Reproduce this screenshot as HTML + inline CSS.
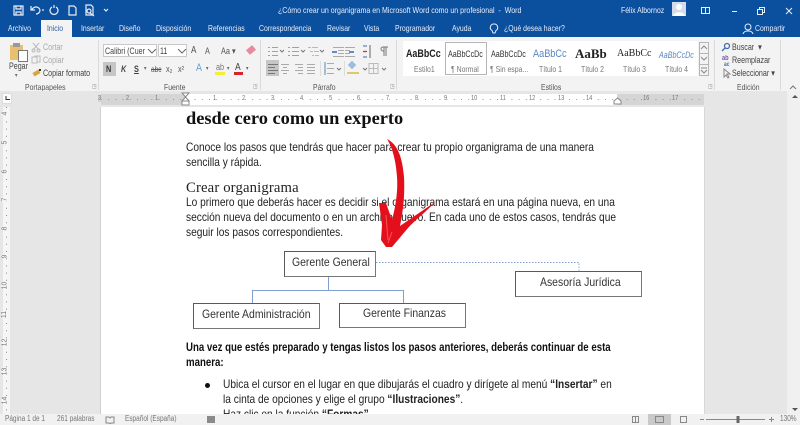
<!DOCTYPE html>
<html lang="es"><head><meta charset="utf-8"><title>Word</title>
<style>
html,body{margin:0;padding:0}
body{width:800px;height:425px;overflow:hidden;position:relative;background:#e6e6e6;font-family:"Liberation Sans",sans-serif;color:#444;filter:blur(.3px)}
.a{position:absolute;white-space:nowrap;line-height:1;transform:scaleX(.81);transform-origin:left top}
.r{position:absolute}
.tab{top:24px;font-size:8.5px;color:#e8eef7}
.lbl{font-size:8.5px;color:#555;top:83px}
.doc{font-size:12px;color:#222;transform:scaleX(.847)}
.bd{font-size:12px;color:#111;font-weight:700;transform:scaleX(.804)}
.bt{font-size:12px;color:#333;transform:scaleX(.87)}
.box{position:absolute;box-sizing:border-box;background:#fff;border:1px solid #5a5a5a;border-bottom-color:#777;border-right-color:#777}
.st{font-size:8.5px;color:#777}
.sep{position:absolute;top:40px;height:50px;width:1px;background:#dadada}
.stat{font-size:8px;color:#777;top:415px}
.rn{font-size:7px;color:#777;top:95px}
.sm{font-size:8.8px;color:#555}
.dim{font-size:8.8px;color:#aaa}
.ar{font-size:6px;color:#666}
.vn{font-size:7px;color:#777;left:3px;transform:rotate(-90deg);transform-origin:center}
</style></head><body>

<div class="r" style="left:0;top:0;width:800px;height:37px;background:#0b4f9f"></div>
<svg class="r" style="left:0;top:0" width="130" height="20" fill="none" stroke="#e8eef7" stroke-width="1.2">
<path d="M14 6h9v9h-9z"/><path d="M16 6v3h5V6M16 15v-3h5v3"/>
<path d="M32 10a4 3.500 0 1 1 4 4M31 6v4h4"/><path d="M42 10h2"/>
<path d="M52 7a4 4 0 1 0 4 0M54 5v3"/>
<path d="M69 6h5l2 2v7h-7z"/>
<path d="M86 5h5l2 2v8h-7zM90 13l4 3"/><circle cx="89" cy="11" r="2"/>
<path d="M104 9l2 2 2-2"/>
</svg>
<div class="a" style="left:278px;top:6px;font-size:8.5px;color:#e8eef7;transform:scaleX(.828)">¿Cómo crear un organigrama en Microsoft Word como un profesional &nbsp;-&nbsp; Word</div>
<div class="a" style="left:621px;top:6px;font-size:8.5px;color:#e8eef7">Félix Albornoz</div>
<div class="r" style="left:672px;top:2px;width:14px;height:14px;background:#d4dde9"></div>
<svg class="r" style="left:672px;top:2px" width="14" height="14"><circle cx="7" cy="5" r="3" fill="#fff"/><path d="M1 14c1-5 11-5 12 0z" fill="#fff"/></svg>
<svg class="r" style="left:695px;top:2px" width="105" height="16" fill="none" stroke="#e8eef7" stroke-width="1">
<path d="M6.500 5.500h8v6h-8zM10.500 5.500v6"/><path d="M37 9.500h5"/><path d="M62.500 7.500h5v5h-5zM64.500 7.500v-2h5v5h-2"/><path d="M91 6l6 6M97 6l-6 6"/>
</svg>
<div class="a tab" style="left:8px">Archivo</div>
<div class="r" style="left:41px;top:20px;width:31px;height:18px;background:#f3f3f3"></div>
<div class="a tab" style="left:47px;color:#2b5c9f">Inicio</div>
<div class="a tab" style="left:81px">Insertar</div>
<div class="a tab" style="left:119px">Diseño</div>
<div class="a tab" style="left:156px">Disposición</div>
<div class="a tab" style="left:208px">Referencias</div>
<div class="a tab" style="left:259px">Correspondencia</div>
<div class="a tab" style="left:327px">Revisar</div>
<div class="a tab" style="left:364px">Vista</div>
<div class="a tab" style="left:395px">Programador</div>
<div class="a tab" style="left:452px">Ayuda</div>
<svg class="r" style="left:489px;top:23px" width="10" height="12" fill="none" stroke="#e8eef7"><path d="M5 1a3.500 3.500 0 0 1 2 6.500L6 10H4L3 7.500A3.500 3.500 0 0 1 5 1z"/></svg>
<div class="a tab" style="left:504px">¿Qué desea hacer?</div>
<svg class="r" style="left:742px;top:23px" width="12" height="12" fill="none" stroke="#e8eef7"><circle cx="6" cy="4" r="3"/><path d="M1 11c1-4 9-4 10 0"/></svg>
<div class="a tab" style="left:755px">Compartir</div>

<div class="r" style="left:0;top:37px;width:800px;height:54px;background:#f3f3f3"></div>
<!-- Portapapeles -->
<div class="r" style="left:10px;top:45px;width:13px;height:15px;background:#e8c06f"></div>
<div class="r" style="left:13px;top:43px;width:7px;height:4px;background:#999"></div>
<div class="r" style="left:18px;top:50px;width:8px;height:10px;background:#fff;border:1px solid #777"></div>
<div class="a sm" style="left:9px;top:62px;color:#444">Pegar</div>
<div class="a ar" style="left:15px;top:73px">▾</div>
<svg class="r" style="left:31px;top:42px" width="12" height="36" fill="none" stroke="#bbb"><path d="M2 1l6 7M8 1L2 8"/><circle cx="2.500" cy="8.500" r="1.500"/><circle cx="7.500" cy="8.500" r="1.500"/><path d="M1 15h5v6H1zM4 15v-1h5v6H6"/></svg>
<div class="a dim" style="left:43px;top:43px">Cortar</div>
<div class="a dim" style="left:43px;top:56px">Copiar</div>
<div class="r" style="left:33px;top:71px;width:7px;height:4px;background:#d9a441;transform:rotate(-30deg)"></div>
<div class="r" style="left:39px;top:69px;width:2px;height:2px;background:#333"></div>
<div class="a sm" style="left:43px;top:69px;color:#444">Copiar formato</div>
<div class="a lbl" style="left:25px">Portapapeles</div>
<div class="a ar" style="left:92px;top:84px;color:#888">◳</div>
<div class="sep" style="left:98px"></div>
<!-- Fuente -->
<div class="r" style="left:103px;top:44px;width:54px;height:13px;background:#fff;border:1px solid #c8c8c8;box-sizing:border-box"></div>
<div class="a sm" style="left:105px;top:47px;color:#444">Calibri (Cuer</div>
<div class="r" style="left:158px;top:44px;width:29px;height:13px;background:#fff;border:1px solid #c8c8c8;box-sizing:border-box"></div>
<div class="a sm" style="left:160px;top:47px;color:#444">11</div>
<svg class="r" style="left:147px;top:49px" width="40" height="5" fill="none" stroke="#666"><path d="M1 0l4 4 4-4M31 0l4 4 4-4"/></svg>
<div class="a" style="left:191px;top:46px;font-size:10px;color:#555">A</div>
<div class="a" style="left:205px;top:47px;font-size:9px;color:#555">A</div>
<div class="a" style="left:221px;top:47px;font-size:9px;color:#555">Aa ▾</div>
<div class="r" style="left:247px;top:47px;width:8px;height:6px;background:#e58aa0;transform:rotate(-40deg)"></div>
<div class="r" style="left:103px;top:62px;width:13px;height:14px;background:#c6c6c6"></div>
<div class="a" style="left:106px;top:65px;font-size:9px;color:#333;font-weight:700">N</div>
<div class="a" style="left:121px;top:65px;font-size:9px;color:#444;font-weight:700;font-style:italic">K</div>
<div class="a" style="left:134px;top:65px;font-size:9px;color:#444;font-weight:700;text-decoration:underline">S</div>
<div class="a ar" style="left:144px;top:66px">▾</div>
<div class="a" style="left:151px;top:66px;font-size:8px;color:#555;text-decoration:line-through">abc</div>
<div class="a" style="left:166px;top:65px;font-size:9px;color:#555">x₂</div>
<div class="a" style="left:178px;top:65px;font-size:9px;color:#555">x²</div>
<div class="a" style="left:196px;top:63px;font-size:11px;color:#6c9bd1">A</div>
<div class="a ar" style="left:206px;top:66px">▾</div>
<div class="r" style="left:215px;top:72px;width:10px;height:3px;background:#f2ee3a"></div>
<div class="a" style="left:216px;top:63px;font-size:9px;color:#777">ab</div>
<div class="a ar" style="left:227px;top:66px">▾</div>
<div class="a" style="left:235px;top:62px;font-size:10.500px;color:#444">A</div>
<div class="r" style="left:234px;top:72px;width:9px;height:2.500px;background:#d8232a"></div>
<div class="a ar" style="left:246px;top:66px">▾</div>
<div class="a lbl" style="left:164px">Fuente</div>
<div class="a ar" style="left:253px;top:84px;color:#888">◳</div>
<div class="sep" style="left:260px"></div>
<!-- Parrafo -->
<div class="r" style="left:266px;top:60px;width:13px;height:16px;background:#c6c6c6"></div>
<svg class="r" style="left:260px;top:38px" width="136" height="42" fill="none" stroke="#aaa" stroke-width="1">
<path d="M8 9.500h2M12 9.500h6M8 13.500h2M12 13.500h6M8 17.500h2M12 17.500h6" stroke="#8aa5cc"/><path d="M20 12l2 2 2-2" stroke="#777"/>
<path d="M28 9.500h2M32 9.500h7M28 13.500h2M32 13.500h7M28 17.500h2M32 17.500h7" stroke="#8aa5cc"/><path d="M41 12l2 2 2-2" stroke="#777"/>
<path d="M48 9.500h3M52 9.500h6M50 13.500h3M54 13.500h5M52 17.500h2M55 17.500h4" stroke="#a8bcd8"/><path d="M60 12l2 2 2-2" stroke="#777"/>
<path d="M73 9.500h11M78 12.500h6M78 15.500h6M73 18.500h11" stroke="#aaa"/><path d="M77 14h-5" stroke="#2d6db5" stroke-width="1.500"/>
<path d="M85 9.500h10M85 12.500h5M85 15.500h5M85 18.500h10" stroke="#aaa"/><path d="M89 14h5" stroke="#2d6db5" stroke-width="1.500"/>
<path d="M110 7v13" stroke="#666"/><path d="M103 8h4M103 19h4" stroke="#5f86b8" stroke-width="1.300"/><path d="M103 13.500h4" stroke="#c33" stroke-width="1.300"/>
<path d="M124 9h-1a2 2 0 0 0 0 4h1M124 9v9M126 9v9M123 9h5" stroke="#777"/>
<path d="M8 26.500h10M8 29.500h7M8 32.500h10M8 35.500h7" stroke="#777"/>
<path d="M21 26.500h8M23 29.500h4M21 32.500h8M23 35.500h4M35 26.500h8M38 29.500h5M35 32.500h8M38 35.500h5M47 26.500h8M47 29.500h8M47 32.500h8M47 35.500h8"/>
<path d="M65 24v13" stroke="#5f86b8"/><path d="M67 25.500h7M67 30.500h7M67 35.500h7"/><path d="M77 30l2 2 2-2" stroke="#777"/>
<path d="M103 30l2 2 2-2M122 30l2 2 2-2" stroke="#777"/>
<path d="M109 25.500h9v10h-9zM113.500 25.500v10M109 30.500h9" stroke="#bbb"/>
<path d="M60.500 23v15M84.500 23v15" stroke="#ddd"/>
</svg>
<div class="r" style="left:349px;top:62px;width:6px;height:6px;background:#9dbbe0;transform:rotate(45deg)"></div>
<div class="r" style="left:347px;top:72px;width:12px;height:2px;background:#e0c76a"></div>
<div class="a lbl" style="left:313px">Párrafo</div>
<div class="a ar" style="left:390px;top:84px;color:#888">◳</div>
<div class="sep" style="left:396px"></div>
<!-- Estilos -->
<div class="r" style="left:403px;top:41px;width:295px;height:35px;background:#fff"></div>
<div class="r" style="left:445px;top:42px;width:42px;height:33px;border:1.500px solid #b5b5b5;box-sizing:border-box"></div>
<div class="a" style="left:406px;top:49px;font-size:11px;font-weight:700;color:#222">AaBbCc</div>
<div class="a st" style="left:414px;top:65px">Estilo1</div>
<div class="a" style="left:448px;top:50px;font-size:8.800px;color:#333">AaBbCcDc</div>
<div class="a st" style="left:451px;top:65px">¶ Normal</div>
<div class="a" style="left:491px;top:50px;font-size:8.800px;color:#333">AaBbCcDc</div>
<div class="a st" style="left:490px;top:65px">¶ Sin espa...</div>
<div class="a" style="left:533px;top:49px;font-size:11.300px;color:#5b86c0">AaBbCc</div>
<div class="a st" style="left:539px;top:65px">Título 1</div>
<div class="a" style="left:575px;top:47px;font-size:13px;font-weight:700;color:#222;font-family:'Liberation Serif',serif;transform:none">AaBb</div>
<div class="a st" style="left:581px;top:65px">Título 2</div>
<div class="a" style="left:617px;top:49px;font-size:10px;color:#222;font-family:'Liberation Serif',serif;transform:none">AaBbCc</div>
<div class="a st" style="left:623px;top:65px">Título 3</div>
<div class="a" style="left:659px;top:51px;font-size:8.800px;color:#5b86c0;font-style:italic">AaBbCcDc</div>
<div class="a st" style="left:665px;top:65px">Título 4</div>
<svg class="r" style="left:699px;top:42px" width="10" height="35" fill="#f3f3f3" stroke="#b5b5b5">
<path d="M.5 .5h9v11h-9zM.5 11.500h9v11h-9zM.5 22.500h9v11h-9z"/>
<path d="M2 7l3-3 3 3M2 15l3 3 3-3M2 26h6M2 28l3 3 3-3" fill="none" stroke="#888"/>
</svg>
<div class="a lbl" style="left:541px">Estilos</div>
<div class="a ar" style="left:708px;top:84px;color:#888">◳</div>
<div class="sep" style="left:714px"></div>
<!-- Edicion -->
<svg class="r" style="left:721px;top:41px" width="10" height="12" fill="none" stroke="#3f6fae" stroke-width="1.300"><circle cx="6" cy="5" r="2.500"/><path d="M4 7L1 10"/></svg>
<div class="a sm" style="left:732px;top:43px;color:#444">Buscar &nbsp;▾</div>
<div class="a" style="left:722px;top:55px;font-size:7px;color:#7a5aa6;font-weight:700">ab</div>
<div class="a" style="left:724px;top:62px;font-size:6px;color:#3f6fae;font-weight:700">ac</div>
<div class="a sm" style="left:732px;top:56px;color:#444">Reemplazar</div>
<svg class="r" style="left:723px;top:68px" width="10" height="11" fill="none" stroke="#888"><path d="M1 1v8l2-2 2 3 1-1-2-3h3z"/></svg>
<div class="a sm" style="left:732px;top:69px;color:#444">Seleccionar ▾</div>
<div class="a lbl" style="left:737px">Edición</div>
<div class="sep" style="left:780px"></div>
<svg class="r" style="left:789px;top:85px" width="8" height="5" fill="none" stroke="#777"><path d="M1 4l3-3 3 3"/></svg>

<!-- Ruler -->
<div class="r" style="left:0;top:91px;width:800px;height:16px;background:#e6e6e6"></div>
<div class="r" style="left:2px;top:93px;width:10px;height:11px;background:#fbfbfb;border:1px solid #ddd;box-sizing:border-box"></div>
<svg class="r" style="left:5px;top:96px" width="5" height="5" fill="none" stroke="#333"><path d="M1 0v3.500h4"/></svg>
<div class="r" style="left:101px;top:94px;width:85px;height:11px;background:#d5d5d5"></div>
<div class="r" style="left:186px;top:94px;width:431px;height:11px;background:#fff"></div>
<div class="r" style="left:617px;top:94px;width:87px;height:11px;background:#d5d5d5"></div>
<svg class="r" style="left:101px;top:91px" width="603" height="16" stroke="#999" stroke-dasharray="1 6.200" fill="none"><path d="M0 8.500h603"/></svg>
<div class="a rn" style="left:98px;background:#d5d5d5">3</div><div class="a rn" style="left:126px;background:#d5d5d5">2</div><div class="a rn" style="left:155px;background:#d5d5d5">1</div>
<div class="a rn" style="left:213px;background:#fff">1</div><div class="a rn" style="left:242px;background:#fff">2</div><div class="a rn" style="left:271px;background:#fff">3</div><div class="a rn" style="left:300px;background:#fff">4</div><div class="a rn" style="left:329px;background:#fff">5</div><div class="a rn" style="left:357px;background:#fff">6</div><div class="a rn" style="left:386px;background:#fff">7</div><div class="a rn" style="left:415px;background:#fff">8</div><div class="a rn" style="left:444px;background:#fff">9</div><div class="a rn" style="left:471px;background:#fff">10</div><div class="a rn" style="left:500px;background:#fff">11</div><div class="a rn" style="left:529px;background:#fff">12</div><div class="a rn" style="left:558px;background:#fff">13</div><div class="a rn" style="left:586px;background:#fff">14</div><div class="a rn" style="left:643px;background:#d5d5d5">16</div><div class="a rn" style="left:672px;background:#d5d5d5">17</div>
<svg class="r" style="left:181px;top:92px" width="10" height="14" fill="#fff" stroke="#888"><path d="M1 1h7L4.500 5zM1 9l3.500-4L8 9zM1 9h7v4H1z"/></svg>
<svg class="r" style="left:613px;top:97px" width="9" height="8" fill="#fff" stroke="#888"><path d="M1 7V4l3.500-3L8 4v3z"/></svg>

<!-- Vertical ruler -->
<div class="r" style="left:3px;top:107px;width:7px;height:307px;background:#f6f6f6"></div>
<svg class="r" style="left:3px;top:107px" width="7" height="307" stroke="#888" stroke-dasharray="1 6.200" fill="none"><path d="M3.500 0v307"/></svg>
<div class="a vn" style="top:110px;background:#f6f6f6">4</div><div class="a vn" style="top:139px;background:#f6f6f6">5</div><div class="a vn" style="top:168px;background:#f6f6f6">6</div><div class="a vn" style="top:196px;background:#f6f6f6">7</div><div class="a vn" style="top:225px;background:#f6f6f6">8</div><div class="a vn" style="top:253px;background:#f6f6f6">9</div><div class="a vn" style="top:282px;background:#f6f6f6;left:1px">10</div><div class="a vn" style="top:311px;background:#f6f6f6;left:1px">11</div><div class="a vn" style="top:339px;background:#f6f6f6;left:1px">12</div><div class="a vn" style="top:368px;background:#f6f6f6;left:1px">13</div><div class="a vn" style="top:397px;background:#f6f6f6;left:1px">14</div>
<!-- Page -->
<div class="r" style="left:100px;top:107px;width:1px;height:307px;background:#d0d0d0"></div>
<div class="r" style="left:101px;top:107px;width:603px;height:307px;background:#fff"></div>
<div class="r" style="left:704px;top:107px;width:1px;height:307px;background:#d8d8d8"></div>
<!-- Scrollbar -->
<div class="r" style="left:787px;top:91px;width:13px;height:323px;background:#f0f0f0"></div>
<div class="r" style="left:792px;top:95px;width:0;height:0;border:3px solid transparent;border-bottom:3px solid #555;border-top:0"></div>
<div class="r" style="left:792px;top:408px;width:0;height:0;border:3px solid transparent;border-top:3px solid #555;border-bottom:0"></div>

<div class="a" style="left:186px;top:109px;font-family:'Liberation Serif',serif;font-weight:700;font-size:18.400px;color:#111;transform:none">desde cero como un experto</div>
<div class="a doc" style="left:186px;top:141px">Conoce los pasos que tendrás que hacer para crear tu propio organigrama de una manera</div>
<div class="a doc" style="left:186px;top:156px">sencilla y rápida.</div>
<div class="a" style="left:186px;top:181px;font-family:'Liberation Serif',serif;font-size:14.700px;color:#222;letter-spacing:.15px;transform:none">Crear organigrama</div>
<div class="a doc" style="left:186px;top:196px">Lo primero que deberás hacer es decidir si el organigrama estará en una página nueva, en una</div>
<div class="a doc" style="left:186px;top:211px">sección nueva del documento o en un archivo nuevo. En cada uno de estos casos, tendrás que</div>
<div class="a doc" style="left:186px;top:226px">seguir los pasos correspondientes.</div>

<svg class="r" style="left:250px;top:255px" width="340" height="50" fill="none">
<path d="M78.500 22v13M2.500 48V35.500h151V48" stroke="#7f9fce"/>
<path d="M126 7.500h203v8" stroke="#7f9fce" stroke-dasharray="1.500 1.500"/>
</svg>
<div class="box" style="left:284px;top:251px;width:92px;height:26px"></div>
<div class="box" style="left:515px;top:271px;width:127px;height:26px"></div>
<div class="box" style="left:193px;top:303px;width:127px;height:26px"></div>
<div class="box" style="left:339px;top:303px;width:127px;height:25px"></div>
<div class="a bt" style="left:292px;top:256px">Gerente General</div>
<div class="a bt" style="left:540px;top:276px">Asesoría Jurídica</div>
<div class="a bt" style="left:202px;top:308px">Gerente Administración</div>
<div class="a bt" style="left:363px;top:307px">Gerente Finanzas</div>

<div class="a bd" style="left:186px;top:341px">Una vez que estés preparado y tengas listos los pasos anteriores, deberás continuar de esta</div>
<div class="a bd" style="left:186px;top:356px">manera:</div>
<div class="r" style="left:205px;top:383px;width:5px;height:5px;border-radius:50%;background:#111"></div>
<div class="a doc" style="left:223px;top:378px">Ubica el cursor en el lugar en que dibujarás el cuadro y dirígete al menú <b>“Insertar”</b> en</div>
<div class="a doc" style="left:223px;top:393px">la cinta de opciones y elige el grupo <b>“Ilustraciones”</b>.</div>
<div class="a doc" style="left:223px;top:408px">Haz clic en la función <b>“Formas”</b>.</div>

<svg class="r" style="left:0;top:0" width="800" height="425">
<path d="M387 139C395 143 402 152 404 177C405 195 403 212 400 226L435 202C425 213 415 220 408 228L392 247L386 247L381 240L382 225L379 203L386 203L392 220C396 205 398 190 397 177C396 160 392 147 387 139Z" fill="#e3101c"/>
<path d="M386 215L388 240M392 232L388 243" stroke="#f4555c" stroke-width="1" fill="none"/>
</svg>

<!-- Status -->
<div class="r" style="left:0;top:414px;width:800px;height:11px;background:#f1f1f1"></div>
<div class="a stat" style="left:5px">Página 1 de 1</div>
<div class="a stat" style="left:57px">261 palabras</div>
<svg class="r" style="left:105px;top:416px" width="10" height="8" fill="none" stroke="#888"><path d="M1 1h3l1 1 1-1h3v6H6l-1 1-1-1H1z"/></svg>
<div class="a stat" style="left:125px">Español (España)</div>
<div class="r" style="left:207px;top:416px;width:8px;height:7px;background:#8a8a8a"></div>
<div class="r" style="left:648px;top:414px;width:23px;height:11px;background:#c9c9c9"></div>
<svg class="r" style="left:630px;top:416px" width="170" height="8" fill="none" stroke="#888">
<path d="M2.500 .5h3v6h-3zM5.500 .5h3v6h-3zM25.500 .5h8v6h-8zM50.500 .5h6v6h-6z"/>
<path d="M70 3.500h4M76 3.500h59M139 3.500h5M141.500 1v5"/>
<path d="M107 0v7M108 0v7M109 0v7" stroke="#666"/>
</svg>
<div class="a stat" style="left:780px">130%</div>
</body></html>
